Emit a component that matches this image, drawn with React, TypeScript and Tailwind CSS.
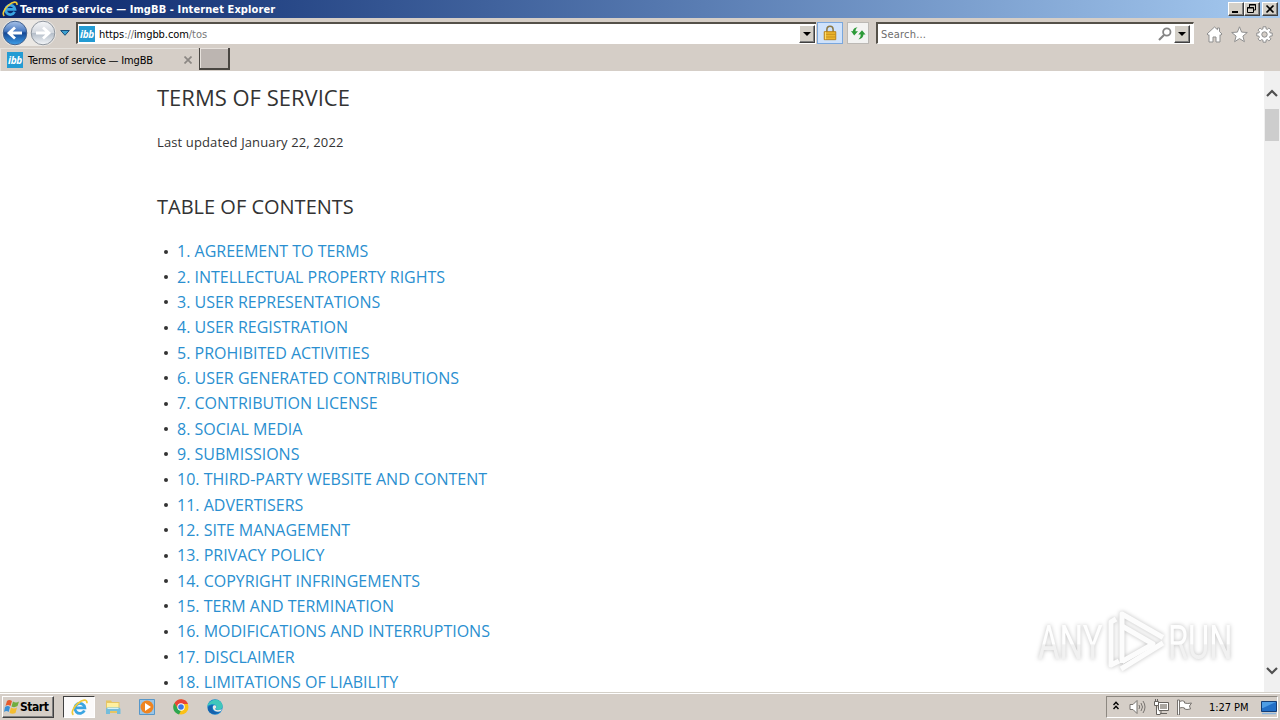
import { clsx } from "clsx";
import type { ReactNode } from "react";

const SECTIONS = [
  "AGREEMENT TO TERMS",
  "INTELLECTUAL PROPERTY RIGHTS",
  "USER REPRESENTATIONS",
  "USER REGISTRATION",
  "PROHIBITED ACTIVITIES",
  "USER GENERATED CONTRIBUTIONS",
  "CONTRIBUTION LICENSE",
  "SOCIAL MEDIA",
  "SUBMISSIONS",
  "THIRD-PARTY WEBSITE AND CONTENT",
  "ADVERTISERS",
  "SITE MANAGEMENT",
  "PRIVACY POLICY",
  "COPYRIGHT INFRINGEMENTS",
  "TERM AND TERMINATION",
  "MODIFICATIONS AND INTERRUPTIONS",
  "DISCLAIMER",
  "LIMITATIONS OF LIABILITY",
];

/* Icons */
function IeIcon({ className }: { className?: string }) {
  return (
    <svg viewBox="0 0 16 16" className={clsx("shrink-0", className)} fill="none">
      <path
        d="M12.6 10.8A4.7 4.7 0 1 1 13 8.3H4.5"
        stroke="#3aa5e2"
        strokeWidth="2.7"
      />
      <path d="M4.3 6.6C5 4.9 6.5 4 8.2 4" stroke="#8bd8fa" strokeWidth="1" />
      <path
        d="M2.3 14.8C-.3 13 2.3 7.7 6.7 4 10.5.8 15.4-.5 15 4"
        stroke="#f0c936"
        strokeWidth="1.6"
      />
    </svg>
  );
}

function IbbIcon() {
  return (
    <div className="flex h-4 w-4 shrink-0 items-center justify-center bg-[#239bd3] font-['Open_Sans',sans-serif] text-[10px] leading-none font-bold tracking-[-0.3px] text-white italic">
      ibb
    </div>
  );
}

function NavArrow({ forward }: { forward?: boolean }) {
  return (
    <svg viewBox="0 0 26 26" className="h-[26px] w-[26px] shrink-0">
      <defs>
        <linearGradient id="back" x2="0" y2="1">
          <stop stopColor="#a9c3e8" />
          <stop offset=".42" stopColor="#4a7bc2" />
          <stop offset=".5" stopColor="#164895" />
          <stop offset="1" stopColor="#3fa0ea" />
        </linearGradient>
        <linearGradient id="forward" x2="0" y2="1">
          <stop stopColor="#f5f6f8" />
          <stop offset=".48" stopColor="#d3d8df" />
          <stop offset=".52" stopColor="#b5bec9" />
          <stop offset="1" stopColor="#f4f7fa" />
        </linearGradient>
      </defs>
      <circle
        cx="13"
        cy="13"
        r="11.8"
        fill={forward ? "url(#forward)" : "url(#back)"}
        stroke={forward ? "#8f969f" : "#42618e"}
      />
      <path
        d={forward ? "M6 13h12M13 7.5l6 5.5-6 5.5" : "M20 13H8M13 7.5L7 13l6 5.5"}
        fill="none"
        stroke="#fff"
        strokeWidth="2.8"
      />
    </svg>
  );
}

function DropButton() {
  return (
    <div className="flex h-[18px] w-4 shrink-0 items-center justify-center border border-t-white border-r-[#404040] border-b-[#404040] border-l-white bg-[#d4d0c8] shadow-[inset_-1px_-1px_#808080]">
      <svg viewBox="0 0 8 4" className="h-1 w-2">
        <path d="M0 0h8L4 4z" fill="#000" />
      </svg>
    </div>
  );
}

function CaptionButton({ children }: { children: ReactNode }) {
  return (
    <div className="h-[14px] w-4 border border-t-white border-r-[#404040] border-b-[#404040] border-l-white bg-[#d4d0c8] shadow-[inset_-1px_-1px_#808080]">
      <svg viewBox="0 0 14 12" className="h-3 w-[14px]" fill="none" stroke="#000">
        {children}
      </svg>
    </div>
  );
}

/* Window title */
function TitleBar() {
  return (
    <div className="flex h-[18px] shrink-0 items-center bg-linear-to-r from-[#0a246a] to-[#a6caf0] pr-[2px] pl-[2px]">
      <IeIcon className="h-4 w-4" />
      <span className="ml-[2px] pt-px text-[11px] leading-4 font-bold tracking-[0.1px] whitespace-nowrap text-white">
        Terms of service — ImgBB - Internet Explorer
      </span>
      <div className="ml-auto flex">
        <CaptionButton>
          <path d="M3 9h6" strokeWidth="2" />
        </CaptionButton>
        <CaptionButton>
          <path d="M4.5 4V1.5h6V7H9M4 2h7" />
          <path d="M2.5 4.5h6v5h-6zM2 5h7" />
        </CaptionButton>
        <div className="ml-[2px]">
          <CaptionButton>
            <path d="M3.5 2.5l7 7M10.5 2.5l-7 7" strokeWidth="1.7" />
          </CaptionButton>
        </div>
      </div>
    </div>
  );
}

function AddressBar() {
  return (
    <div className="flex h-[30px] shrink-0 items-center pl-[2px]">
      <div className="flex gap-[2px] rounded-full bg-[#ebe8e4]">
        <NavArrow />
        <NavArrow forward />
      </div>
      <svg viewBox="0 0 10 6" className="ml-[4px] h-[6px] w-[10px] shrink-0">
        <path d="M.7.5h8.6L5 5.3z" fill="#3ba0cf" stroke="#174d79" />
      </svg>
      <div className="ml-[6px] flex h-[22px] w-[740px] items-center border-t-2 border-b border-l-2 border-t-[#555149] border-b-white border-l-[#555149] bg-white pr-[1px]">
        <div className="ml-px">
          <IbbIcon />
        </div>
        <span className="ml-1 pt-[2px] text-[11px] leading-4 tracking-[-0.07px] whitespace-nowrap text-[#777]">
          <span>
            <span className="text-black">https</span>://
          </span>
          <span className="text-black">imgbb.com</span>/tos
        </span>
        <div className="ml-auto">
          <DropButton />
        </div>
      </div>

      {/* Security report and refresh */}
      <div className="ml-[1px] flex h-[22px] w-[26px] items-center justify-center border border-[#7aa7dd] bg-[#cfe2fb]">
        <svg viewBox="0 0 14 18" className="h-4 w-[14px]">
          <path
            d="M3.5 8V5a3.5 3.5 0 0 1 7 0v3"
            fill="none"
            stroke="#8b7845"
            strokeWidth="1.7"
          />
          <path d="M.5 7.5h13v9H.5z" fill="#ecb52d" stroke="#b57c12" />
          <path d="M1 10.5h12M1 13.5h12" stroke="#c58e1c" />
          <path d="M2 8v8" stroke="#ffe480" />
        </svg>
      </div>
      <div className="ml-1 flex h-[22px] w-[22px] items-center justify-center border border-[#bcb9b5] bg-[#f3f3f2]">
        <svg viewBox="0 0 16 16" className="h-4 w-4" fill="#2c9a38">
          <path d="M1 6l1.8.3Q3.2 3 7.5 2.3 5.4 3.8 5.4 6.3H8L4.2 10.5z" />
          <path d="M15.5 9.5h-2q-.3 3.8-5 5 2.3-1.7 2.3-5H8.300L12 5.300z" />
        </svg>
      </div>

      <div className="ml-[7px] flex h-[22px] w-[318px] items-center border-t-2 border-r border-b border-l-2 border-t-[#555149] border-r-white border-b-white border-l-[#555149] bg-white pr-[3px]">
        <span className="ml-[3px] pt-[2px] text-[11px] leading-4 tracking-[0.2px] text-[#6d6d6d]">
          Search...
        </span>
        <svg
          viewBox="0 0 14 14"
          className="mr-[2px] ml-auto h-[14px] w-[14px]"
          fill="none"
          stroke="#858585"
          strokeWidth="1.8"
        >
          <circle cx="8.8" cy="5" r="3.7" />
          <path d="M6 8L1 13" strokeWidth="2.2" />
        </svg>
        <DropButton />
      </div>

      <div className="mt-[3px] ml-[12px] flex items-center gap-[8px]">
        <svg
          viewBox="0 0 17 17"
          className="h-[17px] w-[17px]"
          fill="#fff"
          stroke="#8f8f8f"
        >
          <path d="M8.5 1L1 8l1.2 1.3.8-.6V16h4v-5h3v5h4V8.7l.8.6L16 8l-2.5-2.4V2h-2v1.7z" />
        </svg>
        <svg
          viewBox="0 0 17 17"
          className="h-[17px] w-[17px]"
          fill="#fff"
          stroke="#8f8f8f"
        >
          <path d="M8.5.8l2.1 5.3 5.7.4-4.4 3.6 1.5 5.6-4.9-3.1-4.9 3.1 1.5-5.6L.7 6.5l5.7-.4z" />
        </svg>
        <svg
          viewBox="0 0 17 17"
          className="h-[17px] w-[17px]"
          fill="#fff"
          stroke="#8f8f8f"
        >
          <path d="M7 .8h3v2l1.4.6L12.9 2 15 4.1l-1.4 1.5.6 1.4h2v3h-2l-.6 1.4 1.4 1.5-2.1 2.1-1.5-1.4-1.4.6v2H7v-2l-1.4-.6L4.1 15 2 12.9l1.4-1.5-.6-1.4h-2V7h2l.6-1.4L2 4.1 4.1 2l1.5 1.4L7 2.8z" />
          <circle cx="8.5" cy="8.5" r="2.7" fill="#d5cec7" />
        </svg>
      </div>
    </div>
  );
}

function TabBar() {
  return (
    <div className="flex h-[23px] shrink-0">
      <div className="flex h-[23px] w-[198px] items-center border-t border-l border-[#e6e2dd] pl-[6px]">
        <IbbIcon />
        <span className="ml-[5px] pt-[2px] text-[11px] leading-4 tracking-[-0.16px] whitespace-nowrap text-black">
          Terms of service — ImgBB
        </span>
        <svg
          viewBox="0 0 8 8"
          className="mr-[6px] ml-auto h-2 w-2"
          stroke="#8b8783"
          strokeWidth="1.7"
        >
          <path d="M.5.5l7 7M7.5.5l-7 7" />
        </svg>
      </div>
      <div className="ml-px h-[22px] w-[31px] border-r-2 border-b-2 border-l border-[#484541] border-l-[#484541] bg-[#bcb5b1] shadow-[inset_1px_1px_#e7e2dd]" />
    </div>
  );
}

/* Recorder logo laid over the page */
function Watermark() {
  return (
    <div className="absolute top-[538px] left-[1034px] drop-shadow-[0_0_2px_rgba(0,0,0,0.25)]">
      <svg viewBox="0 0 210 66" className="h-[66px] w-[210px]">
        <defs>
          <linearGradient id="letters" x2="0" y2="1">
            <stop offset=".52" stopColor="#fefefe" />
            <stop offset=".54" stopColor="#f1f1f1" />
          </linearGradient>
        </defs>
        <g
          fill="url(#letters)"
          fontFamily="Roboto, sans-serif"
          fontSize="48"
          fontWeight="400"
        >
          <text transform="translate(4 50) scale(.69 1)">ANY</text>
          <text transform="translate(134 50) scale(.68 1)">RUN</text>
        </g>
        <g
          fill="none"
          stroke="#fcfcfc"
          strokeWidth="5"
          strokeLinejoin="round"
        >
          <path d="M82 10l-5 3v43l8-4" />
          <path d="M88 54V5l41 23.5" />
          <path d="M88 17l31 18-31 17.5" />
          <path d="M129 34L87 60" />
        </g>
      </svg>
    </div>
  );
}

function Page() {
  return (
    <div className="relative flex h-[621px] shrink-0 overflow-hidden bg-white font-['Open_Sans',sans-serif] text-[#333]">
      <main className="flex-1 pl-[157px]">
        <h1 className="mt-[10px] text-[22px] leading-8">TERMS OF SERVICE</h1>
        <p className="mt-[19px] text-[13px] leading-5 tracking-[0.12px]">
          Last updated January 22, 2022
        </p>
        <h2 className="mt-[39px] text-[20px] leading-8">TABLE OF CONTENTS</h2>
        <ul className="mt-[16px] pl-[7px]">
          {SECTIONS.map((section, i) => (
            <li key={section} className="flex h-[25.35px] items-center">
              <span className="h-1 w-1 rounded-full bg-[#333]" />
              <a className="ml-[9px] text-[16px] leading-[25px] whitespace-nowrap text-[#2a8fd0]">
                {i + 1}. {section}
              </a>
            </li>
          ))}
        </ul>
      </main>
      <div className="flex w-4 shrink-0 flex-col items-center bg-[#f0f0f0]">
        <svg
          viewBox="0 0 12 8"
          className="mt-[18px] h-2 w-3"
          fill="none"
          stroke="#505050"
          strokeWidth="2.2"
        >
          <path d="M1 7l5-5 5 5" />
        </svg>
        <div className="mt-3 h-8 w-[14px] bg-[#cdcdcd]" />
        <svg
          viewBox="0 0 12 8"
          className="mt-auto mb-[17px] h-2 w-3"
          fill="none"
          stroke="#505050"
          strokeWidth="2.2"
        >
          <path d="M1 1l5 5 5-5" />
        </svg>
      </div>
      <Watermark />
    </div>
  );
}

/* Taskbar */
function Taskbar() {
  return (
    <div className="flex h-7 shrink-0 items-center border-t border-[#d4d0c8] pl-[2px] shadow-[inset_0_1px_#fff]">
      <div className="mt-px flex h-[22px] w-[52px] items-center border border-t-white border-r-[#404040] border-b-[#404040] border-l-white pl-[1px] shadow-[inset_-1px_-1px_#808080]">
        <svg viewBox="0 0 16 16" className="h-4 w-4 shrink-0">
          <path d="M3 2q2-2 5 0L6.5 7Q4 5 1.5 7z" fill="#e65b2c" />
          <path d="M9 2.5q3 2 6 0L13.5 7q-3 2-6 .5z" fill="#70ad40" />
          <path d="M1 8q3-2 5 0l-1.4 5Q2.5 11 0 13z" fill="#3990d6" />
          <path d="M7 8.5q3 2 6 0L11.5 14q-3 1.5-6 0z" fill="#f4bd31" />
        </svg>
        <span className="text-[12px] font-bold tracking-[-0.45px] text-black">
          Start
        </span>
      </div>
      <div className="mt-px ml-[9px] flex h-[22px] w-8 items-center justify-center border border-t-[#404040] border-r-white border-b-white border-l-[#404040] bg-[#fbfafa]">
        <IeIcon className="h-[17px] w-[17px]" />
      </div>
      <div className="ml-[10px] flex items-center gap-[18px]">
        <svg viewBox="0 0 16 16" className="h-4 w-4">
          <path d="M1 1.5h5l1 1.5h7.5v11H1z" fill="#e6c563" />
          <path d="M2 4h11.5v7H2z" fill="#fff0a0" />
          <path d="M2.5 8.5h11q2 0 2 2V15H12v-3H5v3H1v-4.5q0-2 1.5-2z" fill="#74bddb" />
          <path d="M2.5 9.5h11" stroke="#d4f0f8" />
        </svg>
        <svg viewBox="0 0 16 16" className="h-4 w-4">
          <path d="M.5.5h15v15H.5z" fill="#9ac5e7" stroke="#5797c9" />
          <circle cx="8" cy="8" r="6.5" fill="#ef8420" />
          <path d="M6 4l6 4-6 4z" fill="#fff" />
        </svg>
        <svg viewBox="0 0 16 16" className="h-4 w-4">
          <circle cx="8" cy="8" r="7.5" fill="#fbc116" />
          <path d="M1.5 4A7.5 7.5 0 0 1 15 5H8a3.5 3.5 0 0 0-3 5z" fill="#e84436" />
          <path d="M1.5 4L5 10l3 1.5-2 4A7.5 7.5 0 0 1 1.5 4z" fill="#2da650" />
          <circle cx="8" cy="8" r="3.7" fill="#fff" />
          <circle cx="8" cy="8" r="2.8" fill="#3977e5" />
        </svg>
        <svg viewBox="0 0 16 16" className="h-4 w-4">
          <circle cx="8" cy="8" r="7.7" fill="#1484cf" />
          <path
            d="M.4 7C2 0 13-2 15.5 6c1 5-5 6-7 4 3-3-1-7-8.1-3z"
            fill="#40c7bb"
          />
          <path d="M6 6c-3 4 1 9 7 6-4 6-13 2-12-3 0-2 3-3 5-3z" fill="#1762ac" />
          <path d="M6 7c2-2 5 1 2 3 2 2 5 1 7 0l-1 2c-5 2-9-1-8-5z" fill="#ece9e3" />
        </svg>
      </div>

      {/* Notification area */}
      <div className="mt-[1px] mr-[2px] ml-auto flex h-[22px] w-[172px] items-center border border-t-[#8d8881] border-r-white border-b-white border-l-[#8d8881] pl-[6px]">
        <svg
          viewBox="0 0 6 9"
          className="mb-[4px] h-[9px] w-[6px]"
          fill="none"
          stroke="#000"
          strokeWidth="1.4"
        >
          <path d="M.5 4L3 1.2 5.5 4M.5 8L3 5.2 5.5 8" />
        </svg>
        <svg
          viewBox="0 0 17 16"
          className="ml-[10px] h-4 w-[17px]"
          fill="none"
          stroke="#77736f"
        >
          <path d="M1 5.5h3l4-4v13l-4-4H1z" fill="#fff" />
          <path d="M10 6q1.5 2 0 4M12 4q3 4 0 8M14 2q4 6 0 12" />
        </svg>
        <svg
          viewBox="0 0 16 16"
          className="ml-[7px] h-4 w-4"
          fill="#fff"
          stroke="#66625e"
        >
          <path d="M5.5 3.5h10v8h-10z" />
          <path d="M7 5h7v5H7z" fill="#aaa6a1" stroke="none" />
          <path d="M8 11.5v3M5 14.5h9" />
          <path d="M1.5 2.5h4v4h-4zM2.5 0v2M4.5 0v2M3.5 7v8.5h4" />
        </svg>
        <svg
          viewBox="0 0 17 16"
          className="ml-[7px] h-4 w-[17px]"
          fill="#fff"
          stroke="#77736f"
        >
          <path d="M1.5 1h2v15h-2zM3.5 2.5q3-1.5 5 0V4q3 1 7 0l-2 3 1 3q-4 1-6 0V9q-2-1-5 0z" />
        </svg>
        <span className="ml-[16px] pt-[2px] text-[11px] leading-4 tracking-[-0.05px] whitespace-nowrap text-black">
          1:27 PM
        </span>
        <svg viewBox="0 0 16 14" className="mt-[2px] ml-auto h-[14px] w-4">
          <path d="M.5.5h15v10H.5z" fill="#226fc7" stroke="#143d75" />
          <path d="M1 1h14L2 7H1z" fill="#4e9de5" />
          <path d="M1 12.5h14" stroke="#89b5df" strokeWidth="1.5" />
        </svg>
      </div>
    </div>
  );
}

export default function App() {
  return (
    <div className="flex h-[720px] w-[1280px] flex-col overflow-hidden bg-[#d5cec7] font-['DejaVu_Sans_Condensed','DejaVu_Sans',sans-serif]">
      <TitleBar />
      <AddressBar />
      <TabBar />
      <Page />
      <Taskbar />
    </div>
  );
}
